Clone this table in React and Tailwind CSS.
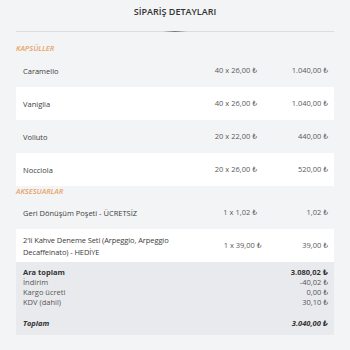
export default function App() {
  const font = { fontFamily: '"Open Sans", "DejaVu Sans", sans-serif' };
  const Row = ({ name, qty, total, white, two }) => (
    <div className={`flex items-center h-[33px] pl-[7px] pr-[6px] ${white ? 'bg-white' : ''}`}>
      <div className={`text-[7.5px] leading-[12px] text-[#3d3d3d] ${two ? 'w-[165px] tracking-[-0.1px]' : 'flex-1'}`}>{name}</div>
      <div className="w-[90px] ml-auto text-right text-[7.5px] text-[#5a5a5a]">{qty}</div>
      <div className="w-[71px] text-right text-[7.5px] text-[#5a5a5a]">{total}</div>
    </div>
  );
  return (
    <div className="w-[350px] h-[350px] bg-[#f3f4f6] px-4" style={font}>
      <div className="h-[31px] pt-[5px] text-center text-[9px] font-semibold text-[#333] leading-[14px]">SİPARİŞ DETAYLARI</div>
      <div className="h-px bg-[#dcdde0] flex justify-center">
        <div className="w-[24px] h-px bg-gradient-to-r from-[#dcdde0] via-[#777] to-[#dcdde0]" />
      </div>
      <div className="pt-[11px] h-[22px] text-[7.5px] leading-[10px] italic font-semibold text-[#e8a365]">KAPSÜLLER</div>
      <Row name="Caramello" qty="40 x 26,00 ₺" total="1.040,00 ₺" />
      <Row name="Vaniglia" qty="40 x 26,00 ₺" total="1.040,00 ₺" white />
      <Row name="Volluto" qty="20 x 22,00 ₺" total="440,00 ₺" />
      <Row name="Nocciola" qty="20 x 26,00 ₺" total="520,00 ₺" white />
      <div className="h-[10px] text-[7.5px] leading-[10px] italic font-semibold text-[#e8a365]">AKSESUARLAR</div>
      <Row name="Geri Dönüşüm Poşeti - ÜCRETSİZ" qty="1 x 1,02 ₺" total="1,02 ₺" />
      <Row name="2'li Kahve Deneme Seti (Arpeggio, Arpeggio Decaffeinato) - HEDİYE" qty="1 x 39,00 ₺" total="39,00 ₺" white two />
      <div className="bg-[#e9eaed] pl-[7px] pr-[6px] pt-[5px] pb-[7px] h-[73px] text-[7.5px] leading-[10px] text-[#555]">
        <div className="flex justify-between">
          <div>
            <div className="font-bold text-[#333]">Ara toplam</div>
            <div>İndirim</div>
            <div>Kargo ücreti</div>
            <div>KDV (dahil)</div>
          </div>
          <div className="text-right">
            <div className="font-bold text-[#333]">3.080,02 ₺</div>
            <div>-40,02 ₺</div>
            <div>0,00 ₺</div>
            <div>30,10 ₺</div>
          </div>
        </div>
        <div className="flex justify-between mt-[11px] font-bold italic text-[#333]">
          <div>Toplam</div>
          <div>3.040,00 ₺</div>
        </div>
      </div>
    </div>
  );
}
